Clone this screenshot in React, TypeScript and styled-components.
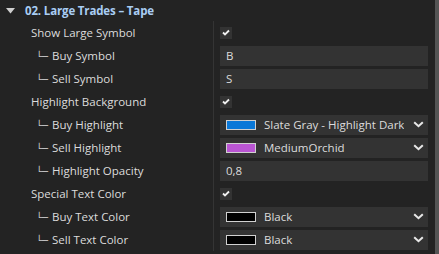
import styled, { createGlobalStyle } from 'styled-components'

const Global = createGlobalStyle`
  html, body {
    margin: 0;
    padding: 0;
    background: #232323;
  }
  body {
    font-family: 'Open Sans', 'Noto Sans', 'DejaVu Sans', sans-serif;
  }
`

type Row =
  | { kind: 'check'; label: string; child?: boolean }
  | { kind: 'text'; label: string; child?: boolean; value: string }
  | { kind: 'color'; label: string; child?: boolean; value: string; swatch: string }

const rows: Row[] = [
  { kind: 'check', label: 'Show Large Symbol' },
  { kind: 'text', label: 'Buy Symbol', child: true, value: 'B' },
  { kind: 'text', label: 'Sell Symbol', child: true, value: 'S' },
  { kind: 'check', label: 'Highlight Background' },
  { kind: 'color', label: 'Buy Highlight', child: true, value: 'Slate Gray - Highlight Dark', swatch: '#0a78d8' },
  { kind: 'color', label: 'Sell Highlight', child: true, value: 'MediumOrchid', swatch: '#ba55d3' },
  { kind: 'text', label: 'Highlight Opacity', child: true, value: '0,8' },
  { kind: 'check', label: 'Special Text Color' },
  { kind: 'color', label: 'Buy Text Color', child: true, value: 'Black', swatch: '#000000' },
  { kind: 'color', label: 'Sell Text Color', child: true, value: 'Black', swatch: '#000000' },
]

const Page = styled.div`
  display: flex;
  width: 439px;
  height: 254px;
  overflow: hidden;
  background: #232323;
`

const Content = styled.div`
  flex: 1;
  display: flex;
  flex-direction: column;
`

const Header = styled.div`
  height: 21px;
  display: flex;
  align-items: center;
  padding-left: 6px;
  gap: 10px;
  color: #a9cdf3;
  font-weight: 700;
  font-size: 11.5px;
  letter-spacing: -0.15px;
`

const Grid = styled.div`
  display: grid;
  grid-template-columns: 214px 1fr;
`

const Label = styled.div<{ $child?: boolean }>`
  height: 23px;
  display: flex;
  align-items: center;
  padding-left: ${p => (p.$child ? '36px' : '31px')};
  color: #dcdcdc;
  font-size: 11.5px;
  white-space: nowrap;
  border-right: 1px solid #343434;
  box-sizing: border-box;
`

const Branch = styled.span`
  display: inline-block;
  font-family: 'DejaVu Sans Mono', monospace;
  font-size: 10px;
  line-height: 1;
  width: 16px;
  color: #cfcfcf;
  transform: translateY(1px);
`

const Cell = styled.div`
  height: 23px;
  display: flex;
  align-items: center;
  padding-left: 6px;
  padding-right: 7px;
`

const Check = styled.div`
  width: 12px;
  height: 12px;
  background: #333;
  display: flex;
  align-items: center;
  justify-content: center;
`

const Field = styled.div`
  flex: 1;
  min-width: 0;
  height: 20px;
  background: #333333;
  display: flex;
  align-items: center;
  padding-left: 6px;
  padding-right: 4px;
  color: #dcdcdc;
  font-size: 11.5px;
  white-space: nowrap;
  overflow: hidden;
`

const Swatch = styled.span<{ $color: string }>`
  width: 28px;
  height: 8px;
  flex: none;
  background: ${p => p.$color};
  border: 1px solid #d0d0d0;
  margin-right: 8px;
`

const Value = styled.span`
  flex: 1;
  min-width: 0;
  margin-right: 9px;
  overflow: hidden;
  white-space: nowrap;
`

const Scrollbar = styled.div`
  width: 12px;
  display: flex;
  background: #2a2a2a;
`

const Thumb = styled.div`
  width: 7px;
  background: #555;
  border-right: 1px solid #666;
`

const CheckMark = () => (
  <svg width="8" height="7" viewBox="0 0 8 7">
    <path d="M1 3.5 L3 5.5 L7 1.5" stroke="#f0f0f0" strokeWidth="1.8" fill="none" />
  </svg>
)

const Chevron = () => (
  <svg width="11" height="7" viewBox="0 0 11 7" style={{ flex: 'none' }}>
    <path d="M1.2 1.2 L5.5 5.2 L9.8 1.2" stroke="#e8e8e8" strokeWidth="2" fill="none" />
  </svg>
)

const Triangle = () => (
  <svg width="9" height="6" viewBox="0 0 9 6">
    <path d="M0 0 H9 L4.5 5.5 Z" fill="#cfcfcf" />
  </svg>
)

export default function App() {
  return (
    <Page>
      <Global />
      <Content>
        <Header>
          <Triangle />
          <span>02. Large Trades – Tape</span>
        </Header>
        <Grid>
          {rows.map((r, i) => [
            <Label key={'l' + i} $child={r.child}>
              {r.child && <Branch>└─</Branch>}
              {r.label}
            </Label>,
            <Cell key={'c' + i}>
              {r.kind === 'check' && (
                <Check>
                  <CheckMark />
                </Check>
              )}
              {r.kind === 'text' && <Field>{r.value}</Field>}
              {r.kind === 'color' && (
                <Field>
                  <Swatch $color={r.swatch} />
                  <Value>{r.value}</Value>
                  <Chevron />
                </Field>
              )}
            </Cell>,
          ])}
        </Grid>
      </Content>
      <Scrollbar>
        <Thumb />
      </Scrollbar>
    </Page>
  )
}
